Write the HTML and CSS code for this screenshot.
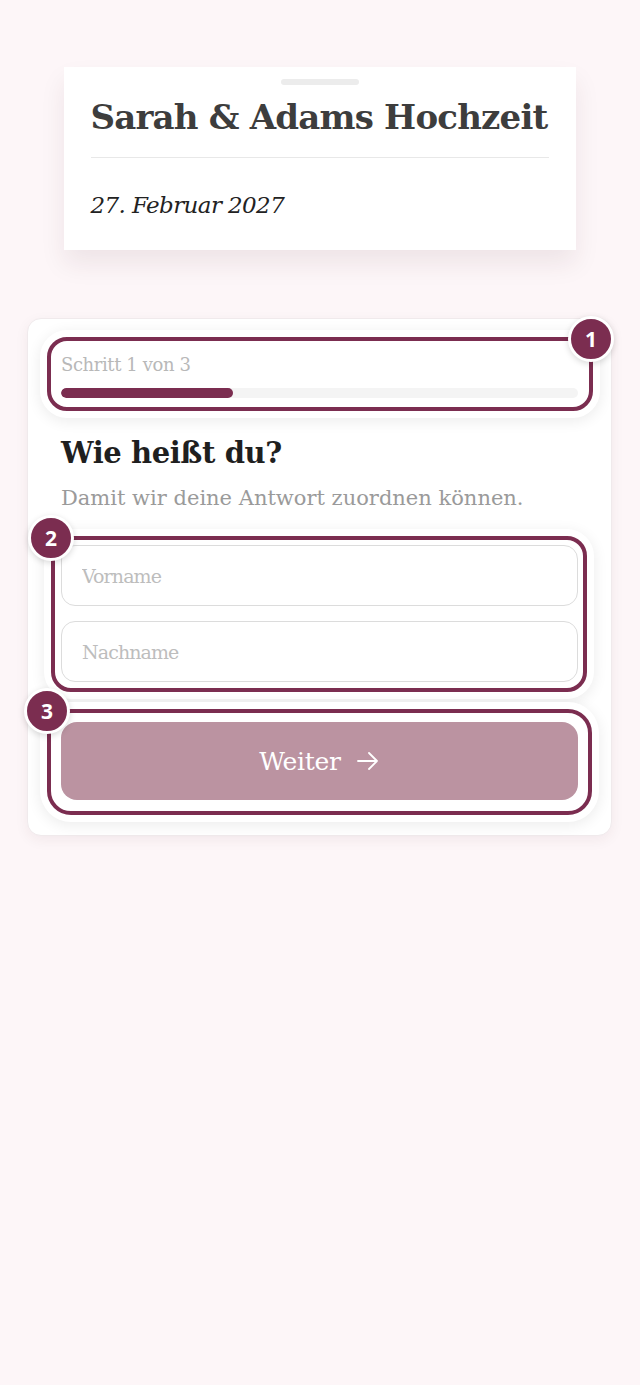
FILE: index.html
```html
<!DOCTYPE html>
<html lang="de">
<head>
  <meta charset="UTF-8" />
  <meta name="viewport" content="width=device-width, initial-scale=1.0"/>
  <title>Sarah &amp; Adams Hochzeit | RSVP</title>
  <link rel="stylesheet" href="styles.css">
</head>
<body>

  <div class="event-card">
    <div class="handle"></div>
    <h1 class="event-title">Sarah &amp; Adams Hochzeit</h1>
    <div class="event-date">27. Februar 2027</div>
  </div>

  <div class="rsvp-card">
    <div class="step-block">
      <div class="step-label">Schritt 1 von 3</div>
      <div class="progress"><div class="progress-fill" style="width: 33.3%"></div></div>
      <div class="mark mark-step"><span class="badge badge-right">1</span></div>
    </div>

    <h2 class="question">Wie heißt du?</h2>
    <p class="hint">Damit wir deine Antwort zuordnen können.</p>

    <form id="nameForm">
      <div class="fields">
        <input type="text" placeholder="Vorname" />
        <input type="text" placeholder="Nachname" />
        <div class="mark mark-fields"><span class="badge badge-left">2</span></div>
      </div>

      <div class="action">
        <button type="submit">
          Weiter
          <svg width="24" height="20" viewBox="0 0 24 20" fill="none" stroke="#fff" stroke-width="1.8" stroke-linecap="round" stroke-linejoin="round">
            <path d="M2 10h19M13 2l8 8-8 8"/>
          </svg>
        </button>
        <div class="mark mark-action"><span class="badge badge-left">3</span></div>
      </div>
    </form>
  </div>

</body>
</html>
```

FILE: styles.css
```css
* {
  box-sizing: border-box;
  margin: 0;
  padding: 0;
}

body {
  font-family: 'DejaVu Serif', 'Liberation Serif', serif;
  background: #fdf6f8;
  color: #222;
  padding: 67px 28px 0 27px;
  min-height: 100vh;
}

.event-card {
  position: relative;
  width: 512px;
  margin: 0 auto;
  background: #fff;
  padding: 28px 27px 29px;
  box-shadow: 0 14px 24px rgba(60, 20, 35, 0.08);
}

.handle {
  position: absolute;
  top: 12px;
  left: 217px;
  width: 78px;
  height: 6px;
  border-radius: 3px;
  background: #ececec;
}

.event-title {
  font-size: 34px;
  font-weight: bold;
  color: #3d3d3d;
  letter-spacing: -0.8px;
  line-height: 44px;
  padding-bottom: 18px;
  border-bottom: 1px solid #e8e8e8;
  white-space: nowrap;
}

.event-date {
  font-style: italic;
  font-size: 23px;
  color: #222;
  margin-top: 31px;
  line-height: 32px;
  letter-spacing: -0.6px;
}

.rsvp-card {
  margin-top: 68px;
  background: #fff;
  border: 1px solid #f0eaec;
  border-radius: 14px;
  padding: 30px 33px 35px;
  box-shadow: 0 4px 14px rgba(60, 20, 35, 0.06);
}

.step-block {
  position: relative;
}

.step-label {
  font-size: 18px;
  color: #b8b8b8;
  line-height: 32px;
  letter-spacing: -0.4px;
}

.progress {
  margin-top: 7px;
  height: 10px;
  border-radius: 5px;
  background: #f4f4f4;
  overflow: hidden;
}

.progress-fill {
  height: 100%;
  border-radius: 5px;
  background: #7b2d50;
}

.question {
  margin-top: 36px;
  font-size: 29px;
  font-weight: bold;
  color: #1f1f1f;
  line-height: 38px;
  letter-spacing: -0.4px;
}

.hint {
  margin-top: 12px;
  font-size: 21px;
  color: #9a9a9a;
  line-height: 28px;
}

form {
  margin-top: 33px;
}

.fields {
  position: relative;
  display: flex;
  flex-direction: column;
  gap: 15px;
}

.fields input {
  height: 61px;
  border: 1px solid #dcdcdc;
  border-radius: 14px;
  padding: 0 20px;
  font-family: inherit;
  font-size: 19px;
  color: #222;
  letter-spacing: -0.9px;
}

.fields input::placeholder {
  color: #bdbdbd;
}

.action {
  position: relative;
  margin-top: 40px;
}

.action button {
  width: 100%;
  height: 78px;
  border: none;
  border-radius: 16px;
  background: #bb93a1;
  color: #fff;
  font-family: inherit;
  font-size: 25px;
  letter-spacing: -0.3px;
  display: flex;
  align-items: center;
  justify-content: center;
  gap: 15px;
  cursor: pointer;
}

/* annotation overlays */
.mark {
  position: absolute;
  border: 4px solid #7b2d50;
  border-radius: 20px;
  pointer-events: none;
  box-shadow: 0 0 0 7px #fff, 0 3px 14px 8px rgba(0, 0, 0, 0.07);
}

.mark-step {
  top: -12px;
  bottom: -13px;
  left: -14px;
  right: -15px;
}

.mark-fields {
  top: -9px;
  bottom: -10px;
  left: -10px;
  right: -9px;
}

.mark-action {
  top: -13px;
  bottom: -15px;
  left: -14px;
  right: -14px;
  border-radius: 24px;
}

.badge {
  position: absolute;
  width: 46px;
  height: 46px;
  border-radius: 50%;
  background: #7b2d50;
  border: 3px solid #fff;
  box-shadow: 0 2px 6px rgba(0, 0, 0, 0.15);
  color: #fff;
  font-family: 'Open Sans', 'DejaVu Sans', sans-serif;
  font-weight: bold;
  font-size: 21px;
  display: flex;
  align-items: center;
  justify-content: center;
}

.badge-right {
  top: -25px;
  right: -25px;
}

.badge-left {
  top: -25px;
  left: -27px;
}
```
